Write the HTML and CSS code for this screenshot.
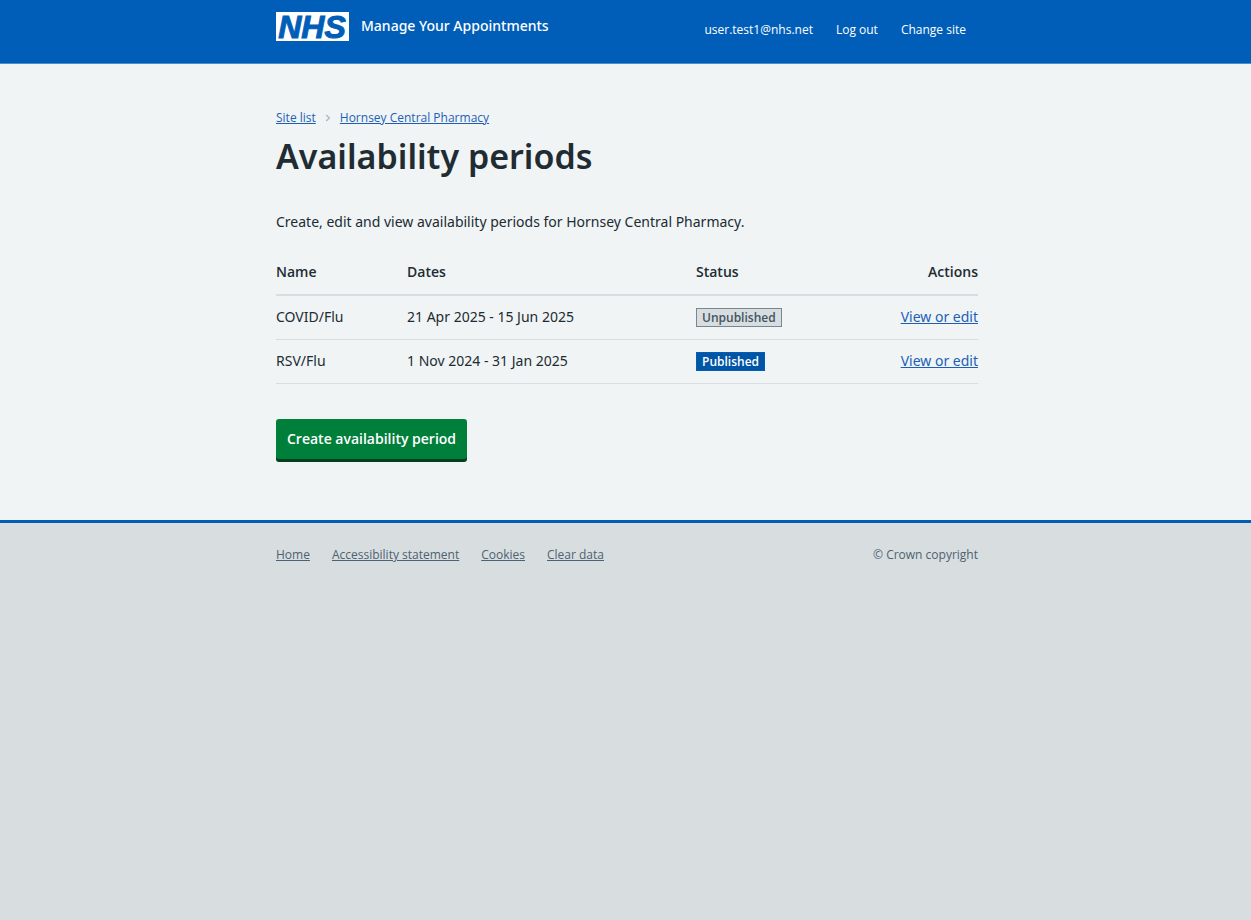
FILE: index.html
```html
<!DOCTYPE html>
<html lang="en">
<head>
<meta charset="utf-8">
<meta name="viewport" content="width=device-width, initial-scale=1">
<title>Availability periods - Manage Your Appointments</title>
<link rel="stylesheet" href="styles.css">
</head>
<body>
<header class="header">
  <div class="container header-inner">
    <a class="brand" href="#">
      <svg class="logo" width="73" height="29" viewBox="0 0 73 29" role="img" aria-label="NHS">
        <rect width="73" height="29" fill="#fff"/>
        <text class="logo-text" x="36" y="26" text-anchor="middle">NHS</text>
      </svg>
      <span class="service">Manage Your Appointments</span>
    </a>
    <nav class="account" aria-label="Account">
      <span>user.test1@nhs.net</span>
      <a href="#">Log out</a>
      <a href="#">Change site</a>
    </nav>
  </div>
</header>
<main class="container main">
  <nav class="breadcrumb" aria-label="Breadcrumb">
    <a href="#">Site list</a>
    <svg class="chevron" width="6" height="8" viewBox="0 0 6 8" aria-hidden="true"><path d="M1.2 1 4.4 4 1.2 7" fill="none" stroke="#aeb7bd" stroke-width="1.3"/></svg>
    <a href="#">Hornsey Central Pharmacy</a>
  </nav>
  <h1 class="title">Availability periods</h1>
  <p class="intro">Create, edit and view availability periods for Hornsey Central Pharmacy.</p>
  <table class="periods">
    <thead>
      <tr><th class="col-name" scope="col">Name</th><th class="col-dates" scope="col">Dates</th><th class="col-status" scope="col">Status</th><th class="col-actions" scope="col">Actions</th></tr>
    </thead>
    <tbody>
      <tr><td>COVID/Flu</td><td>21 Apr 2025 - 15 Jun 2025</td><td><strong class="tag tag-grey">Unpublished</strong></td><td class="col-actions"><a href="#">View or edit</a></td></tr>
      <tr><td>RSV/Flu</td><td>1 Nov 2024 - 31 Jan 2025</td><td><strong class="tag">Published</strong></td><td class="col-actions"><a href="#">View or edit</a></td></tr>
    </tbody>
  </table>
  <button class="button" type="button">Create availability period</button>
</main>
<footer class="footer">
  <div class="container footer-inner">
    <nav class="footer-links" aria-label="Footer">
      <a href="#">Home</a>
      <a href="#">Accessibility statement</a>
      <a href="#">Cookies</a>
      <a href="#">Clear data</a>
    </nav>
    <p class="copyright">© Crown copyright</p>
  </div>
</footer>
</body>
</html>
```
FILE: styles.css
```css
* { box-sizing: border-box; }
body {
  margin: 0;
  min-height: 100vh;
  display: flex;
  flex-direction: column;
  background: #f0f4f5;
  color: #212b32;
  font-family: "Noto Sans", "Open Sans", sans-serif;
  font-size: 14px;
  line-height: 20px;
}
a { color: #1d5fb8; }
.container {
  width: 100%;
  max-width: 705px;
  margin: 0 auto;
  padding-left: 3px;
}
.header {
  background: #005eb8;
  color: #fff;
  border-bottom: 1px solid #4c8ecd;
}
.header a { color: #fff; text-decoration: none; }
.header-inner {
  display: flex;
  justify-content: space-between;
  align-items: flex-start;
  padding-top: 12px;
  padding-right: 12px;
  padding-bottom: 22px;
}
.brand { display: flex; align-items: flex-start; gap: 12px; }
.logo { display: block; overflow: visible; }
.logo-text {
  fill: #005eb8;
  stroke: #005eb8;
  stroke-width: 1px;
  font-family: "Liberation Sans", Arial, sans-serif;
  font-size: 32px;
  font-style: italic;
  font-weight: 700;
}
.service { padding-top: 4px; font-weight: 500; }
.account, .breadcrumb, .footer, .tag, .button, .periods th {
  font-family: "Open Sans", "Noto Sans", sans-serif;
}
.account {
  display: flex;
  gap: 23px;
  padding-top: 8px;
  font-size: 12px;
  font-weight: 500;
}
.main { padding-top: 44px; padding-bottom: 61px; }
.breadcrumb {
  display: flex;
  align-items: center;
  gap: 9px;
  font-size: 12px;
}
.title {
  margin: 8px 0 36px;
  font-size: 34px;
  line-height: 40px;
  font-weight: 600;
}
.intro { margin: 0 0 28px; }
.periods {
  width: 100%;
  border-collapse: collapse;
  table-layout: fixed;
  margin-bottom: 35px;
}
.periods th, .periods td {
  padding: 12px 0;
  text-align: left;
  vertical-align: top;
  border-bottom: 1px solid #d8dde0;
}
.periods td { padding-top: 11px; }
.periods th {
  padding-top: 2px;
  font-weight: 600;
}
.periods thead th { border-bottom-width: 2px; }
.col-name { width: 131px; }
.col-dates { width: 289px; }
.col-status { width: 141px; }
.periods .col-actions { text-align: right; }
.tag {
  display: inline-block;
  padding: 0 5px;
  border: 1px solid #005eb8;
  background: #0055a5;
  color: #fff;
  font-size: 12px;
  line-height: 17px;
  font-weight: 600;
}
.tag-grey { background: #d8dde0; border-color: #768692; color: #425563; }
.button {
  display: block;
  padding: 10px 11px;
  border: 0;
  border-radius: 3px;
  background: #007f3b;
  box-shadow: 0 3px 0 #00401e;
  color: #fff;
  font-size: 14px;
  line-height: 20px;
  font-weight: 600;
  cursor: pointer;
}
.footer {
  flex: 1;
  background: #d8dde0;
  border-top: 3px solid #005eb8;
  color: #4c6272;
  font-size: 12px;
}
.footer a { color: #4c6272; }
.footer-inner {
  display: flex;
  justify-content: space-between;
  padding-top: 22px;
}
.footer-links { display: flex; gap: 22px; }
.copyright { margin: 0; }
```
